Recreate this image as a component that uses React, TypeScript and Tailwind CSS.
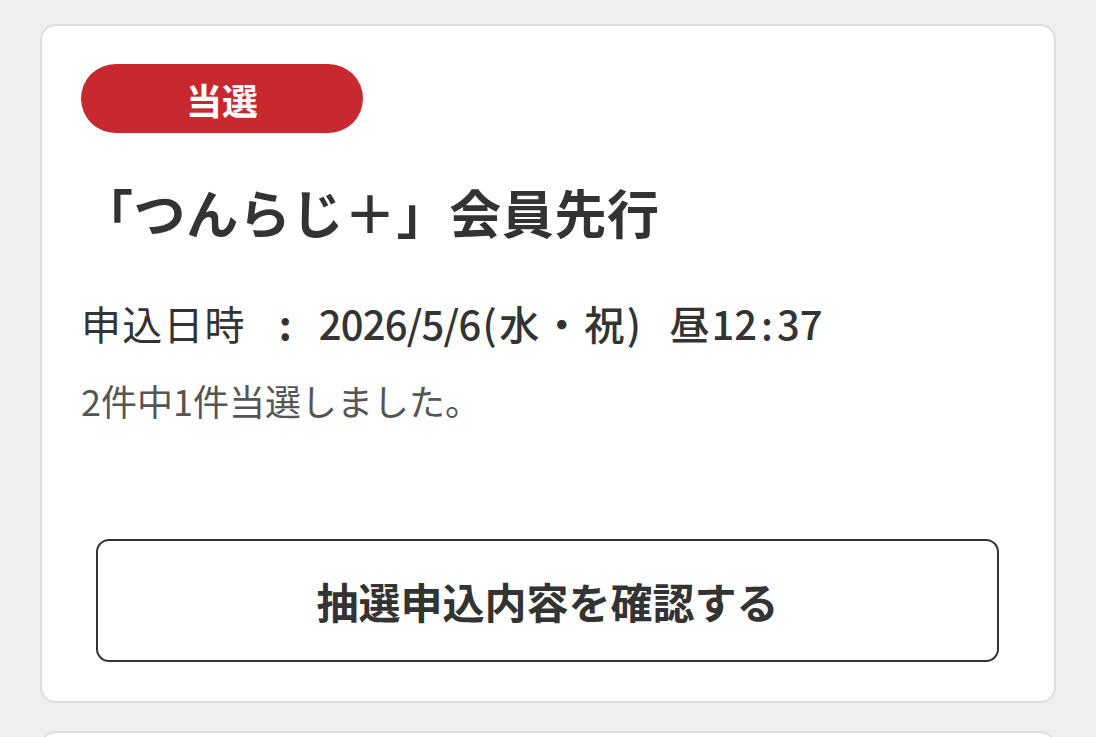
import React from "react";

export default function App() {
  return (
    <div className="min-h-[737px] w-full overflow-hidden bg-[#efefef] pt-[24px] font-['Noto_Sans_CJK_JP','Noto_Sans',sans-serif] text-[#333333]">
      <div className="mx-[40px] rounded-[16px] border-2 border-[#dddddd] bg-white px-[39px] pb-[39px] pt-[38px]">
        <div className="flex h-[69px] w-[282px] items-center justify-center rounded-full bg-[#c8292e] text-[36px] font-bold leading-none text-white">
          当選
        </div>
        <h1 className="mt-[52px] text-[52px] font-bold leading-[53px] tracking-[0.6px]">「つんらじ＋」会員先行</h1>
        <div className="mt-[65px] flex items-center text-[40px] leading-[40px]">
          <span className="tracking-[1.2px]">申込日時</span>
          <span className="ml-[33px] font-bold">:</span>
          <span className="ml-[27px] font-medium tracking-[-0.8px]">2026/5/6</span>
          <span className="ml-[2px] font-medium tracking-[2.5px]">(水・祝)</span>
          <span className="ml-[26px] font-medium">昼</span>
          <span className="ml-[2px] font-medium">12</span>
          <span className="mx-[4px] font-medium">:</span>
          <span className="font-medium">37</span>
        </div>
        <p className="mt-[39px] text-[36px] leading-[36px] text-[#555555]">2件中1件当選しました。</p>
        <button className="mx-[15px] mt-[121px] flex h-[123px] w-[calc(100%-31px)] items-center justify-center rounded-[13px] border-2 border-[#333333] bg-white text-[42px] font-bold text-[#333333]">
          抽選申込内容を確認する
        </button>
      </div>
      <div className="mx-[40px] mt-[28px] h-[120px] rounded-[16px] border-2 border-[#dddddd] bg-white"></div>
    </div>
  );
}
